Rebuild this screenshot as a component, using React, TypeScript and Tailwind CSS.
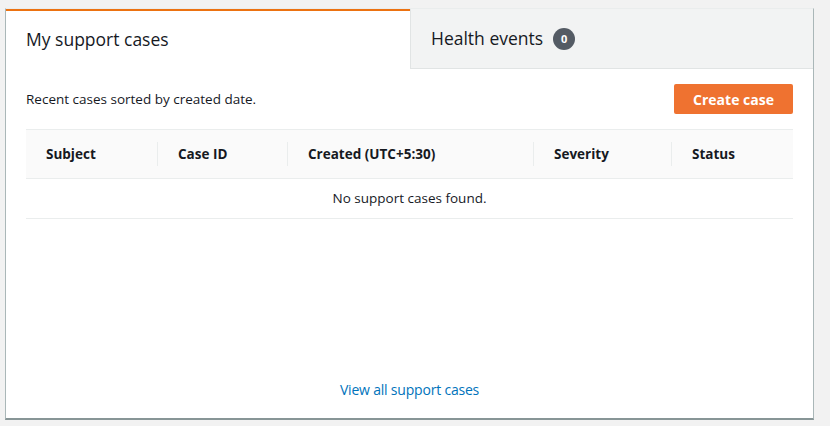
export default function App() {
  const cols = [
    { label: 'Subject', w: 'w-[132px]' },
    { label: 'Case ID', w: 'w-[130px]' },
    { label: 'Created (UTC+5:30)', w: 'w-[246px]' },
    { label: 'Severity', w: 'w-[138px]' },
    { label: 'Status', w: 'flex-1' },
  ]

  return (
    <div className="min-h-[426px] w-[830px] bg-[#f2f2f2] pt-2 pl-[5px]" style={{ fontFamily: '"Open Sans", "Noto Sans", sans-serif' }}>
      <div className="w-[809px] h-[412px] bg-white border border-[#eaeded] border-l-[#aab7b8] border-r-[#aab7b8] border-b-2 border-b-[#879596] flex flex-col">
        <div className="flex h-[60px]">
          <div className="w-[404px] border-t-2 border-[#ec7211] px-5 pt-[15px] text-[17.5px] text-[#16191f]">
            My support cases
          </div>
          <div className="flex-1 bg-[#f2f3f3] border-l border-b border-[#e1e4e4] pl-5 pt-[16px] flex items-start gap-[10px] text-[17.5px] text-[#16191f]">
            <span>Health events</span>
            <span className="mt-[3px] w-[22px] h-[22px] rounded-full bg-[#545b64] text-white text-[11px] font-bold flex items-center justify-center">0</span>
          </div>
        </div>

        <div className="flex-1 flex flex-col px-5">
          <div className="flex items-center justify-between pt-[15px] pb-[15px]">
            <span className="text-[13.5px] text-[#16191f]">Recent cases sorted by created date.</span>
            <button className="w-[119px] h-[30px] rounded-[2px] bg-[#ef7230] text-white text-[14px] font-bold">
              Create case
            </button>
          </div>

          <div className="border-t border-[#eaeded]">
            <div className="flex h-[49px] bg-[#fafafa] border-b border-[#eaeded] items-center">
              {cols.map((c, i) => (
                <div key={c.label} className={`${c.w} h-[24px] flex items-center pl-5 text-[13.5px] font-bold text-[#16191f] ${i < cols.length - 1 ? 'border-r border-[#eaeded]' : ''}`}>
                  {c.label}
                </div>
              ))}
            </div>
            <div className="h-[40px] border-b border-[#eaeded] flex items-center justify-center text-[13.5px] text-[#16191f]">
              No support cases found.
            </div>
          </div>

          <div className="flex-1" />
          <div className="pb-[17px] text-center">
            <a className="text-[14px] text-[#0073bb] tracking-[-0.2px]">View all support cases</a>
          </div>
        </div>
      </div>
    </div>
  )
}
